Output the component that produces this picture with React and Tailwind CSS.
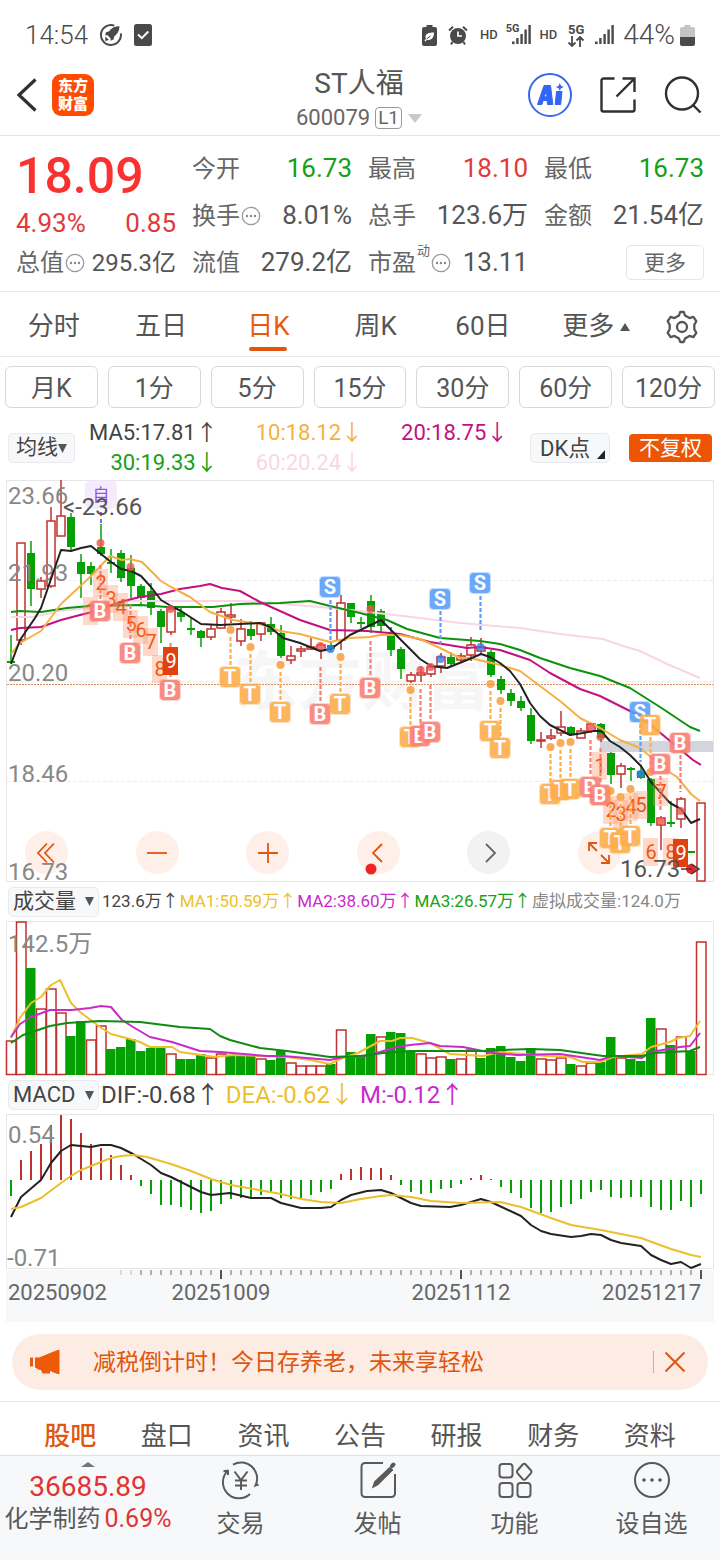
import React from "react";

const RED = "#c0302c";
const GREEN = "#04a004";

/* [color, bodyTop, bodyBottom, high, low], one entry per trading day */
const candles = [
  ["g", 661, 663, 635, 663], ["r", 543, 640, 543, 645], ["g", 553, 589, 541, 606], ["r", 581, 589, 577, 598],
  ["r", 521, 586, 507, 588], ["r", 516, 536, 480, 536], ["g", 517, 547, 513, 550], ["g", 562, 574, 554, 598],
  ["g", 566, 574, 562, 585], ["g", 547, 554, 524, 556], ["g", 562, 564, 549, 573], ["g", 553, 578, 550, 582],
  ["g", 568, 586, 555, 598], ["g", 586, 598, 584, 604], ["g", 591, 608, 583, 615], ["g", 611, 627, 609, 643],
  ["r", 609, 632, 606, 635], ["g", 612, 617, 608, 622], ["g", 628, 630, 618, 635], ["g", 631, 638, 630, 647],
  ["r", 629, 637, 625, 640], ["r", 612, 628, 608, 628], ["r", 615, 617, 603, 623], ["r", 629, 641, 619, 646],
  ["g", 629, 636, 621, 640], ["r", 623, 634, 623, 641], ["g", 624, 632, 617, 635], ["g", 633, 656, 625, 658],
  ["r", 656, 660, 646, 664], ["r", 649, 651, 646, 657], ["r", 647, 649, 638, 650], ["r", 645, 650, 643, 659],
  ["g", 645, 649, 642, 652], ["r", 603, 640, 595, 650], ["g", 603, 617, 603, 623], ["g", 622, 624, 617, 628],
  ["g", 601, 627, 595, 633], ["g", 611, 626, 609, 633], ["g", 635, 650, 627, 656], ["g", 649, 669, 647, 679],
  ["r", 675, 681, 672, 683], ["r", 673, 675, 666, 682], ["r", 667, 674, 664, 677], ["r", 657, 666, 653, 673],
  ["g", 657, 664, 652, 666], ["r", 656, 660, 653, 662], ["r", 645, 655, 637, 661], ["r", 647, 651, 638, 655],
  ["g", 652, 675, 650, 677], ["g", 679, 690, 676, 694], ["g", 693, 701, 689, 706], ["g", 701, 708, 696, 711],
  ["g", 715, 741, 708, 744], ["r", 740, 741, 732, 748], ["r", 736, 738, 729, 740], ["r", 727, 733, 711, 736],
  ["g", 727, 734, 726, 736], ["r", 731, 738, 728, 738], ["r", 724, 731, 723, 733], ["g", 724, 738, 723, 742],
  ["g", 753, 775, 752, 784], ["r", 766, 774, 763, 788], ["g", 768, 770, 767, 781], ["g", 771, 778, 765, 779],
  ["g", 779, 823, 778, 826], ["r", 818, 825, 816, 850], ["g", 822, 824, 801, 827], ["r", 799, 819, 797, 828],
  ["g", 851, 853, 851, 853], ["r", 803, 881, 803, 881],
];

const volume = [
  1040, 921, 968, 1008, 988, 1012, 1036, 1021, 1039, 1025, 1049, 1047, 1039, 1051, 1048, 1048, 1053, 1059, 1059, 1054,
  1057, 1053, 1056, 1056, 1056, 1058, 1060, 1051, 1062, 1065, 1065, 1065, 1064, 1029, 1052, 1055, 1034, 1036, 1032, 1033,
  1052, 1053, 1057, 1056, 1059, 1058, 1049, 1058, 1048, 1046, 1057, 1061, 1048, 1058, 1059, 1057, 1064, 1065, 1062, 1062,
  1037, 1057, 1059, 1061, 1018, 1028, 1045, 1036, 1051, 941,
];
/* Ten trading days per group */
const volumeColors = [
  "rrgrrrggrr", "ggggggrggg", "rrgggrggrr", "rrgrgggrgg", "grrrgrrggg", "gggrrrgrrg", "grgggrgrgr",
].join("");

const macd = [
  1196, 1160, 1151, 1144, 1125, 1115, 1119, 1133, 1144, 1148, 1155, 1165, 1175, 1186, 1194, 1205, 1205, 1207, 1210, 1213,
  1211, 1204, 1199, 1198, 1198, 1195, 1193, 1198, 1199, 1198, 1195, 1192, 1189, 1174, 1169, 1167, 1168, 1168, 1175, 1185,
  1192, 1194, 1193, 1189, 1188, 1184, 1178, 1175, 1179, 1187, 1193, 1198, 1208, 1213, 1212, 1207, 1204, 1199, 1192, 1190,
  1197, 1198, 1197, 1197, 1207, 1210, 1210, 1201, 1207, 1194,
];

const priceLines = [
  ["#f9d5e5", "11,617 33,617 60,611 100,607 133,601 167,601 240,601 260,602 320,607 360,611 420,618 460,623 520,628 560,634 603,639 620,645 640,651 667,664 700,678"],
  ["#0c930c", "11,612 20,611 41,612 67,608 90,606 140,605 167,607 213,607 240,604 280,603 310,601 330,606 360,613 387,620 407,629 440,638 480,641 500,644 520,650 540,658 570,668 600,676 630,688 660,707 690,727 700,731"],
  ["#c4117f", "11,630 20,628 41,627 61,620 80,615 100,610 120,602 140,597 161,594 180,589 200,586 210,584 222,588 240,591 260,602 280,611 300,620 330,630 367,631 400,634 430,642 467,648 480,647 500,650 530,660 550,673 580,689 600,696 640,716 693,760 701,765"],
  ["#f6b042", "11,654 20,643 41,631 61,604 90,577 110,556 122,560 130,559 142,562 161,581 171,587 190,597 210,612 233,620 260,624 280,631 300,634 330,642 350,638 370,637 380,635 400,635 420,639 440,648 460,658 470,658 500,665 520,671 540,686 560,701 580,718 600,728 620,740 640,748 651,757 663,768 677,777 691,794 700,801"],
  ["#222222", "11,664 20,640 35,618 41,608 61,550 71,551 81,548 91,546 101,554 111,562 121,569 131,571 141,576 151,587 161,600 171,606 181,611 201,624 220,625 240,624 260,623 270,627 283,638 300,643 320,651 331,649 350,635 381,620 400,639 420,659 431,666 447,668 467,660 481,654 490,657 500,663 510,671 520,684 530,703 540,716 550,725 570,735 583,733 593,731 601,731 610,741 620,747 630,755 641,766 651,782 670,803 681,809 691,823 700,819"],
];

const volumeLines = [
  ["#ecbf2c", "11,1038 20,1018 31,1003 41,997 51,985 60,980 71,1003 80,1012 100,1027 111,1034 130,1039 140,1042 150,1047 172,1047 180,1052 215,1057 233,1055 287,1057 310,1060 330,1064 340,1059 358,1053 380,1041 392,1041 400,1038 412,1038 430,1043 450,1054 483,1056 500,1052 547,1056 570,1057 583,1062 600,1062 613,1057 642,1054 651,1047 670,1042 678,1038 690,1036 700,1021"],
  ["#c92bcb", "11,1037 20,1024 31,1017 50,1010 72,1010 90,1008 101,1006 111,1007 122,1020 133,1027 150,1037 172,1042 200,1051 220,1052 267,1056 283,1056 330,1060 343,1057 360,1057 380,1052 397,1047 410,1045 430,1043 440,1046 463,1047 493,1053 517,1055 560,1054 600,1060 613,1056 642,1058 651,1052 680,1047 690,1046 700,1033"],
  ["#108a10", "11,1043 23,1035 50,1026 67,1023 100,1021 140,1022 180,1027 210,1029 220,1036 230,1040 260,1048 287,1051 330,1057 360,1056 383,1053 410,1051 483,1051 500,1050 530,1049 560,1050 603,1056 642,1056 653,1053 690,1051 700,1047"],
];

const macdLines = [
  ["#222222", "11,1217 21,1197 41,1180 51,1163 61,1151 71,1145 91,1147 101,1145 111,1145 121,1148 133,1154 151,1165 161,1173 171,1177 201,1192 211,1195 230,1193 251,1198 271,1198 281,1203 301,1208 321,1208 331,1207 341,1200 351,1195 367,1191 381,1190 391,1193 411,1203 421,1206 450,1207 461,1205 481,1199 491,1202 521,1216 531,1225 541,1231 551,1234 571,1237 581,1236 591,1234 601,1235 611,1240 621,1243 641,1246 651,1255 661,1260 671,1264 681,1262 691,1268 701,1264"],
  ["#ecbf2c", "11,1209 21,1207 41,1198 61,1183 71,1176 81,1170 111,1158 121,1156 133,1155 147,1157 171,1164 191,1171 211,1179 231,1185 281,1194 301,1199 321,1202 341,1203 361,1199 381,1196 391,1195 411,1197 431,1201 461,1203 500,1202 521,1207 551,1218 571,1225 601,1230 641,1238 671,1249 691,1255 701,1257"],
];

/* [letter, x, boxY, dotY, dashStart, dashEnd] */
const marks = [
  ["B", 100, 611, 543, 565, 600], ["B", 130, 653, 567, 605, 641], ["B", 170, 690, 609, 643, 678],
  ["T", 230, 677, 630, 637, 666], ["T", 250, 694, 647, 654, 683], ["T", 280, 712, 665, 672, 701],
  ["B", 320, 714, 646, 667, 702], ["S", 330, 587, 649, 600, 640], ["T", 340, 704, 657, 664, 693],
  ["B", 370, 688, 609, 641, 677], ["T", 410, 737, 690, 697, 726], ["B", 420, 736, 670, 689, 724],
  ["B", 430, 732, 667, 685, 721], ["S", 440, 599, 659, 611, 644], ["S", 480, 583, 647, 596, 630],
  ["T", 490, 731, 684, 691, 720], ["T", 500, 748, 701, 708, 737], ["T", 550, 794, 747, 754, 783],
  ["T", 560, 790, 743, 750, 779], ["T", 570, 789, 742, 749, 778], ["B", 590, 787, 727, 740, 775],
  ["B", 600, 795, 737, 748, 784], ["T", 610, 838, 791, 798, 827], ["T", 620, 843, 797, 804, 832],
  ["T", 630, 836, 789, 796, 825], ["S", 640, 712, 774, 724, 762], ["T", 650, 725, 772, 737, 766],
  ["B", 660, 764, 821, 776, 812], ["B", 680, 743, 811, 755, 792],
];
const markColors = { B: ["#f97f72", "#ef5350"], T: ["#fdae4b", "#f7962a"], S: ["#5b9ff8", "#2f80ed"] };

const turns = [
  ["1", 91, 611], ["2", 101, 583], ["3", 111, 599], ["4", 121, 607], ["5", 131, 624], ["6", 141, 630], ["7", 151, 642], ["8", 160, 669],
  ["1", 600, 766], ["2", 611, 810], ["3", 621, 814], ["4", 631, 807], ["5", 641, 805], ["6", 651, 852], ["7", 661, 792], ["8", 671, 852],
];

const xAt = (i) => 11 + 10 * i;

function Lines({ data, width = 2 }) {
  return data.map(([color, points]) => (
    <polyline key={color} points={points} fill="none" stroke={color} strokeWidth={width} strokeLinejoin="round" />
  ));
}

function Label({ x, y, children, anchor = "start", fill = "#888888", size = 24 }) {
  return (
    <text x={x} y={y} fontSize={size} fill={fill} textAnchor={anchor}>{children}</text>
  );
}

function PriceChart() {
  return (
    <svg viewBox="0 480 720 402" className="pointer-events-none relative z-10 block w-full overflow-visible" role="img" aria-label="日K线图">
      <rect x="6.5" y="480.5" width="707" height="401" fill="none" stroke="#e6e6e6" />
      {[580.5, 681.5, 781.5].map((y) => (
        <line key={y} x1="7" x2="713" y1={y} y2={y} stroke="#ededed" strokeDasharray="4 2" />
      ))}
      <text x="234" y="704" fontSize="64" fontWeight="700" fill="#f6f6f6">东方财富</text>
      <rect x="600" y="741" width="113" height="11" fill="#d2d6dc" />
      <line x1="7" x2="713" y1="684.5" y2="684.5" stroke="#d98a5c" strokeDasharray="2 1" />
      {candles.map(([c, top, bottom, high, low], i) => {
        const x = xAt(i);
        return c === "g" ? (
          <g key={i}>
            <line x1={x} x2={x} y1={high} y2={low} stroke={GREEN} strokeWidth="1.5" />
            <rect x={x - 4} y={top} width="8" height={bottom - top} fill={GREEN} />
          </g>
        ) : (
          <g key={i} stroke={RED} strokeWidth="1.5">
            <line x1={x} x2={x} y1={high} y2={top} />
            <line x1={x} x2={x} y1={bottom} y2={low} />
            <rect x={x - 4} y={top} width="8" height={bottom - top} fill="#ffffff" />
          </g>
        );
      })}
      <Label x="8" y="504">23.66</Label>
      <Label x="8" y="581">21.93</Label>
      <Label x="8" y="681">20.20</Label>
      <Label x="8" y="782">18.46</Label>
      <Label x="8" y="880">16.73</Label>
      <Lines data={priceLines} />
      {turns.map(([n, x, y]) => (
        <g key={`${n}-${x}`}>
          <rect x={x - 8} y={y - 14} width="15" height="28" fill="#ff9068" fillOpacity="0.35" />
          <text x={x} y={y + 7} fontSize="20" textAnchor="middle" fill="#f0560f">{n}</text>
        </g>
      ))}
      {marks.map(([letter, x, y, dot, from, to]) => {
        const [box, accent] = markColors[letter];
        return (
          <g key={`${letter}-${x}`}>
            <line x1={x + 0.5} x2={x + 0.5} y1={from} y2={to} stroke={box} strokeWidth="2.2" strokeDasharray="4 2" />
            <circle cx={x + 0.5} cy={dot} r="4" fill={accent} fillOpacity="0.8" />
            <rect x={x - 11} y={y - 11} width="22" height="22" rx="4" fill={box} fillOpacity="0.35" />
            <rect x={x - 10} y={y - 10} width="20" height="20" rx="4" fill={box} fillOpacity="0.85" />
            <text x={x} y={y + 7} fontSize="20" fontWeight="700" textAnchor="middle" fill="#ffffff">{letter}</text>
          </g>
        );
      })}
      {[[171, 661], [681, 853]].map(([x, y]) => (
        <g key={x}>
          <rect x={x - 8} y={y - 14} width="15" height="28" fill="#e2410f" />
          <text x={x} y={y + 7} fontSize="20" textAnchor="middle" fill="#ffffff">9</text>
        </g>
      ))}
      <rect x="85" y="480" width="32" height="29" rx="6" fill="#efe3fb" fillOpacity="0.7" />
      <line x1="101" x2="101" y1="512" y2="524" stroke="#a259e8" strokeWidth="2" strokeDasharray="4 3" />
      <text x="101" y="501" fontSize="17" textAnchor="middle" fill="#9b51e0">自</text>
      <Label x="63" y="515" fill="#555555">&lt;-23.66</Label>
      <circle cx="691" cy="869" r="5" fill="#e02828" />
      <circle cx="371" cy="869" r="5.5" fill="#f02323" />
      <Label x="620" y="877" fill="#555555">16.73</Label>
      <path d="M681 869h11M691 864l8 5-8 5" fill="none" stroke="#5a3535" strokeWidth="1.5" />
      <line x1="687" x2="694" y1="852.5" y2="852.5" stroke={GREEN} />
    </svg>
  );
}

function VolumeChart() {
  return (
    <svg viewBox="0 921 720 155" className="block w-full" role="img" aria-label="成交量图">
      <rect x="6.5" y="921.5" width="707" height="153" fill="none" stroke="#e6e6e6" />
      {volume.map((y, i) =>
        volumeColors[i] === "g" ? (
          <rect key={i} x={xAt(i) - 5} y={y} width="9.5" height={1075 - y} fill={GREEN} />
        ) : (
          <rect key={i} x={xAt(i) - 4.5} y={y + 1} width="9.5" height={1073.5 - y} fill="#ffffff" stroke={RED} strokeWidth="1.5" />
        )
      )}
      <Label x="8" y="952">142.5万</Label>
      <Lines data={volumeLines} />
    </svg>
  );
}

function MacdChart() {
  return (
    <svg viewBox="0 1114 720 208" className="block w-full" role="img" aria-label="MACD图">
      <rect x="6" y="1270" width="708" height="52" fill="#f7f8fa" />
      <rect x="6.5" y="1114.5" width="707" height="154" fill="none" stroke="#e6e6e6" />
      {macd.map((y, i) => (
        <line key={i} x1={xAt(i)} x2={xAt(i)} y1="1180" y2={y} stroke={y < 1180 ? RED : GREEN} strokeWidth="2" />
      ))}
      <Label x="8" y="1143">0.54</Label>
      <Label x="7" y="1266">-0.71</Label>
      <Lines data={macdLines} />
      {macd.map((_, i) => {
        if (i < 11) return null;
        const major = i === 21 || i === 45 || i === 69;
        return (
          <line key={i} x1={xAt(i)} x2={xAt(i)} y1="1270" y2={major ? 1279 : 1275} stroke={major ? "#555555" : "#999999"} strokeWidth={major ? 2 : 1.5} strokeOpacity={i < 13 ? 0.4 : 1} />
        );
      })}
      <Label x="8" y="1300" size={22} fill="#666666">20250902</Label>
      <Label x="221" y="1300" size={22} fill="#666666" anchor="middle">20251009</Label>
      <Label x="461" y="1300" size={22} fill="#666666" anchor="middle">20251112</Label>
      <Label x="701" y="1300" size={22} fill="#666666" anchor="end">20251217</Label>
    </svg>
  );
}

function InfoDot() {
  return (
    <svg width="20" height="20" viewBox="0 0 20 20" className="shrink-0" aria-hidden="true">
      <circle cx="10" cy="10" r="8.7" fill="none" stroke="#999999" strokeWidth="1.3" />
      <circle cx="6" cy="10" r="1.2" fill="#888888" />
      <circle cx="10" cy="10" r="1.2" fill="#888888" />
      <circle cx="14" cy="10" r="1.2" fill="#888888" />
    </svg>
  );
}

function Signal({ className }) {
  return (
    <svg width="20" height="20" viewBox="0 0 20 20" className={className} aria-hidden="true" fill="#4a4a4a">
      <rect x="0" y="16.5" width="2.6" height="2.6" />
      <rect x="4.2" y="13" width="2.4" height="6" />
      <rect x="8.4" y="9" width="2.4" height="10" />
      <rect x="12.4" y="4.5" width="2.4" height="14.5" />
      <rect x="16.4" y="0" width="2.4" height="19" />
    </svg>
  );
}

function StatusBar() {
  return (
    <div className="flex h-14 items-center justify-between pt-[14px] pr-[25px] pl-[25px] text-[26px] text-[#4a4a4a]">
      <div className="flex items-center">
        <span className="font-light">14:54</span>
        <svg width="24" height="24" viewBox="0 0 24 24" className="ml-[11px]" aria-hidden="true">
          <path d="M14 2.2A10 10 0 1 0 21.5 9" fill="none" stroke="#4a4a4a" strokeWidth="2" transform="rotate(8 12 12)" />
          <path d="M20.5 3.2c-5.500 0-8.500 2.300-10.300 5L7 9.200l-.800 3 2.400.100 2.900 2.900.200 2.600 2.800-1.200.900-3.300c2.800-2.200 4.800-5 5.100-10.100z" fill="#4a4a4a" />
          <path d="M6.500 13.500l3.500 3.500-4 1z" fill="#4a4a4a" />
        </svg>
        <svg width="18" height="22" viewBox="0 0 18 22" className="ml-[11px]" aria-hidden="true">
          <rect width="18" height="22" rx="2.500" fill="#4a4a4a" />
          <path d="M4 10.500l3.800 3.700L14.300 7.500" fill="none" stroke="#ffffff" strokeWidth="2" />
        </svg>
      </div>
      <div className="flex items-center">
        <svg width="15" height="21" viewBox="0 0 15 21" aria-hidden="true">
          <path d="M4.500 0h6v2H13a2 2 0 0 1 2 2v15a2 2 0 0 1-2 2H2a2 2 0 0 1-2-2V4a2 2 0 0 1 2-2h2.500z" fill="#4a4a4a" />
          <path d="M12 7.500C7 7.500 3.500 8.500 3.500 12l.300 1.800L2.500 16l1 .500 1.200-1.500c4.500.500 7.300-2 7.300-7.500z" fill="#ffffff" />
          <path d="M4.500 14l4-3" stroke="#4a4a4a" strokeWidth="1" />
        </svg>
        <svg width="20" height="21" viewBox="0 0 20 21" className="ml-[11px]" aria-hidden="true">
          <circle cx="10" cy="11" r="8" fill="#4a4a4a" />
          <path d="M10 6.500V11h4" fill="none" stroke="#ffffff" strokeWidth="1.700" />
          <path d="M1 5.500L5 1.800M19 5.500L15 1.800M4.500 17L3 19.500M15.500 17l1.500 2.500" stroke="#4a4a4a" strokeWidth="2" />
        </svg>
        <span className="ml-3 text-[13px] font-medium">HD</span>
        <span className="ml-2 -mt-3 text-[11px] font-bold">5G</span>
        <Signal className="-ml-2" />
        <span className="ml-2 text-[13px] font-medium">HD</span>
        <span className="ml-[10px] flex flex-col items-center">
          <span className="text-[13px] leading-3 font-bold">5G</span>
          <svg width="18" height="11" viewBox="0 0 18 11" aria-hidden="true">
            <path d="M5 0v10M1.500 6.500L5 10l3.500-3.500M13 11V1M9.500 4.500L13 1l3.500 3.500" fill="none" stroke="#4a4a4a" strokeWidth="1.800" />
          </svg>
        </span>
        <Signal className="ml-[10px]" />
        <span className="ml-2 text-[28px] font-light">44%</span>
        <svg width="15" height="21" viewBox="0 0 15 21" className="ml-[5px]" aria-hidden="true">
          <path d="M4.500 0h6v2H13a2 2 0 0 1 2 2v8H0V4a2 2 0 0 1 2-2h2.500z" fill="#c4c4c4" />
          <path d="M0 12h15v7a2 2 0 0 1-2 2H2a2 2 0 0 1-2-2z" fill="#4a4a4a" />
        </svg>
      </div>
    </div>
  );
}

function Header() {
  return (
    <header className="grid h-20 grid-cols-[1fr_auto_1fr] items-center border-b border-[#e4e4e4] pr-[18px] pb-[6px] pl-4">
      <div className="flex items-center gap-[14px]">
        <button type="button" aria-label="返回">
          <svg width="22" height="36" viewBox="0 0 22 36" aria-hidden="true">
            <path d="M19.500 2.500L3 18l16.500 15.500" fill="none" stroke="#303030" strokeWidth="3.200" />
          </svg>
        </button>
        <a href="#home" className="flex size-[42px] flex-col items-center justify-center rounded-[9px] bg-[#ff4a00] text-[15px] leading-[18px] font-black text-white">
          <span>东方</span>
          <span>财富</span>
        </a>
      </div>
      <div className="flex flex-col items-center pt-[10px] text-[#555555]">
        <h1 className="text-[28px] leading-9">ST人福</h1>
        <button type="button" className="flex items-center text-[22px] leading-8 text-[#666666]">
          600079
          <span className="ml-[5px] rounded-[4px] border border-[#999999] px-[2px] text-[19px] leading-[20px]">L1</span>
          <svg width="14" height="9" viewBox="0 0 14 9" className="ml-[6px]" aria-hidden="true">
            <path d="M0 0h14L7 9z" fill="#c8c8c8" />
          </svg>
        </button>
      </div>
      <div className="flex items-center justify-end gap-[28px]">
        <button type="button" aria-label="Ai">
          <svg width="44" height="44" viewBox="0 0 44 44" aria-hidden="true">
            <circle cx="22" cy="22" r="21" fill="none" stroke="#3b66ee" strokeWidth="2" />
            <path d="M9.500 31.500L16 12.500h6.500l2.300 19H19.500l-.300-4h-4l-1.300 4zM16.200 23.700h2.600l-.400-5.500z" fill="#3366f5" stroke="#3366f5" strokeLinejoin="round" fillRule="evenodd" />
            <path d="M28.500 18.500h5.500L32.700 31.500h-5.500z" fill="#3366f5" stroke="#3366f5" strokeLinejoin="round" />
            <path d="M31.800 10l1.200 2.800 2.800 1.200-2.800 1.200-1.200 2.800-1.200-2.800-2.800-1.200 2.800-1.200z" fill="#3366f5" />
          </svg>
        </button>
        <button type="button" aria-label="分享">
          <svg width="36" height="36" viewBox="0 0 36 36" fill="none" stroke="#303030" strokeWidth="2.400" aria-hidden="true">
            <path d="M14.500 1.500H3.500a2 2 0 0 0-2 2v29a2 2 0 0 0 2 2h29a2 2 0 0 0 2-2V22.500M22.500 1.500h12V15M34 2L16.500 19.500" />
          </svg>
        </button>
        <button type="button" aria-label="搜索">
          <svg width="38" height="38" viewBox="0 0 38 38" fill="none" stroke="#303030" strokeWidth="2.400" aria-hidden="true">
            <circle cx="18" cy="17.500" r="16" />
            <path d="M28.500 28.500l8 8" />
          </svg>
        </button>
      </div>
    </header>
  );
}

function Pair({ label, value, color = "text-[#555555]", info, note, size = "text-[26px]" }) {
  return (
    <div className="flex items-center justify-between">
      <span className="flex items-center gap-[1px] text-2xl">
        {label}
        {note && <span className="mb-6 text-[13px] leading-none">{note}</span>}
        {info && <InfoDot />}
      </span>
      <span className={`${size} ${color}`}>{value}</span>
    </div>
  );
}

function Quote() {
  return (
    <section className="grid grid-cols-4 grid-rows-[47px_47px_47px] gap-x-4 border-b border-[#e8e8e8] px-4 pt-[9px] pb-[5px] whitespace-nowrap text-[#666666]">
      <div className="row-span-2 text-[#e03a3a]">
        <div className="text-[50px] leading-[62px] font-medium text-[#fa3131]">18.09</div>
        <div className="flex justify-between text-[26px] leading-8"><span>4.93%</span><span>0.85</span></div>
      </div>
      <Pair label="今开" value="16.73" color="text-[#16a016]" />
      <Pair label="最高" value="18.10" color="text-[#e03a3a]" />
      <Pair label="最低" value="16.73" color="text-[#16a016]" />
      <Pair label="换手" value="8.01%" info />
      <Pair label="总手" value="123.6万" />
      <Pair label="金额" value="21.54亿" />
      <Pair label="总值" value="295.3亿" info size="text-2xl" />
      <Pair label="流值" value="279.2亿" />
      <Pair label="市盈" note="动" value="13.11" info />
      <div className="flex items-center justify-end">
        <button type="button" className="h-[35px] w-[78px] rounded-[5px] border border-[#e6e6e6] text-[21px] leading-7">更多</button>
      </div>
    </section>
  );
}

function PeriodTabs() {
  return (
    <nav className="flex h-[65px] items-center border-b border-[#e8e8e8] pt-[5px] text-[26px] text-[#555555]">
      {["分时", "五日", "日K", "周K", "60日"].map((t) =>
        t === "日K" ? (
          <button key={t} type="button" aria-current="true" className="relative flex-1 text-[#e55b12]">
            {t}
            <span className="absolute -bottom-[5px] left-1/2 h-1 w-[38px] -translate-x-1/2 rounded-full bg-[#e0560f]" />
          </button>
        ) : (
          <button key={t} type="button" className="flex-1">{t}</button>
        )
      )}
      <button type="button" className="flex flex-1 items-center justify-center">
        <span className="flex items-center gap-[6px] pl-3">
          更多
          <svg width="10" height="8" viewBox="0 0 10 8" aria-hidden="true"><path d="M5 0l5 8H0z" fill="#555555" /></svg>
        </span>
      </button>
      <button type="button" aria-label="设置" className="flex w-[76px] shrink-0 justify-center">
        <svg width="34" height="34" viewBox="0 0 34 34" fill="none" stroke="#555555" strokeWidth="2.300" strokeLinejoin="round" aria-hidden="true">
          <path d="M14 5.500L15.200 2h3.600L20 5.500l4.500 2.600 3.900-1.200 2.900 4.300-2 3.600v4.400l2 3.600-2.900 4.300-3.900-1.200-4.500 2.600-1.200 3.500h-3.600L14 28.500l-4.500-2.600-3.900 1.200-2.900-4.300 2-3.600v-4.400l-2-3.600 2.900-4.300 3.900 1.200z" />
          <circle cx="17" cy="17" r="5" />
        </svg>
      </button>
    </nav>
  );
}

function Caret() {
  return <svg width="9" height="9" viewBox="0 0 9 9" aria-hidden="true"><path d="M0 0h9L4.500 9z" fill="#555555" /></svg>;
}

const chip = "flex h-[30px] items-center rounded-[5px] border border-[#e8eaee] bg-[#f7f8fa] text-[#444444]";

function MaRow() {
  return (
    <div className="flex h-[72px] items-center px-2 pt-2 text-[22px] whitespace-nowrap">
      <button type="button" className={`${chip} w-[67px] justify-center text-[21px]`}>均线<Caret /></button>
      <div className="ml-[14px] grid grid-cols-[auto_auto_auto] gap-x-[38px] leading-[30px]">
        <span className="text-right text-[#444444]">MA5:17.81↑</span>
        <span className="text-[#f6b042]">10:18.12↓</span>
        <span className="text-[#c4117f]">20:18.75↓</span>
        <span className="text-right text-[#16a016]">30:19.33↓</span>
        <span className="text-[#fad7e6]">60:20.24↓</span>
      </div>
      <div className="ml-auto flex gap-[19px]">
        <button type="button" className={`${chip} relative w-20 pl-[9px]`}>
          DK点
          <svg width="8" height="9" viewBox="0 0 8 9" className="absolute right-1 bottom-[3px]" aria-hidden="true"><path d="M8 0v9H0z" fill="#222222" /></svg>
        </button>
        <button type="button" className="h-[28px] w-[83px] self-center rounded-[4px] bg-[#ed5505] text-[21px] leading-7 text-white">不复权</button>
      </div>
    </div>
  );
}

function ChartControls() {
  const circle = "flex size-[43px] items-center justify-center rounded-full bg-[#fef0e8]";
  const stroke = { width: 24, height: 24, viewBox: "0 0 24 24", fill: "none", stroke: "#e0560f", strokeWidth: 1.8, "aria-hidden": true };
  return (
    <div className="absolute right-[99px] bottom-2 left-[25px] flex justify-between">
      <button type="button" aria-label="最左" className={circle}><svg {...stroke}><path d="M12 2.500L3 12l9 9.500M19 2.500L10 12l9 9.500" /></svg></button>
      <button type="button" aria-label="缩小" className={circle}><svg {...stroke}><path d="M2 12h20" /></svg></button>
      <button type="button" aria-label="放大" className={circle}><svg {...stroke}><path d="M2 12h20M12 2v20" /></svg></button>
      <button type="button" aria-label="左移" className={circle}><svg {...stroke}><path d="M16 3l-9 9 9 9" /></svg></button>
      <button type="button" aria-label="右移" className="flex size-[43px] items-center justify-center rounded-full bg-[#f2f2f2]"><svg {...stroke} stroke="#666666"><path d="M9 3l9 9-9 9" /></svg></button>
      <button type="button" aria-label="全屏" className={circle}><svg {...stroke}><path d="M2 10V2h8M2 2l8 8M22 14v8h-8M22 22l-8-8" /></svg></button>
    </div>
  );
}

function Banner() {
  return (
    <div className="mx-3 mt-3 mb-[11px] flex h-14 items-center rounded-full bg-[#fcece3] pr-[22px] pl-[18px] text-[#e0560f]">
      <svg width="32" height="26" viewBox="0 0 32 26" className="shrink-0" aria-hidden="true">
        <path d="M0 8.500h3v9H0zM5 8.500h4L27.500 1h2v24h-2L20 22v2.500h-7.500L11 21h-1.500L5 18.500z" fill="#ef5a08" />
      </svg>
      <a href="#pension" className="ml-[31px] pt-[2px] text-[23px] whitespace-nowrap">减税倒计时！今日存养老，未来享轻松</a>
      <button type="button" aria-label="关闭" className="ml-auto border-l border-[#e9a27e] pl-[10px]">
        <svg width="22" height="22" viewBox="0 0 22 22" aria-hidden="true"><path d="M1.500 1.500l19 19M20.500 1.500l-19 19" stroke="#e0560f" strokeWidth="2" /></svg>
      </button>
    </div>
  );
}

const navIcons = {
  交易: (
    <>
      <path d="M12 4.700A16 16 0 0 1 34.500 25.500l3-1M7 10.500A16 16 0 0 0 29 34M7 10.500l-4.500.800M7 10v5" />
      <path d="M13.500 11.500l6.500 8.500 6.500-8.500M20 20v10M14 20.500h12M14 25.500h12" />
    </>
  ),
  发帖: (
    <>
      <path d="M25 3H7a3.500 3.500 0 0 0-3.500 3.500v27A3.500 3.500 0 0 0 7 37h26.500a3.500 3.500 0 0 0 3.500-3.500V14" />
      <path d="M15.500 26.500l1.500-4.500L32 8l2 2-14.500 14.500z" fill="#5a5a5a" />
      <path d="M34 6l1.500-1.500" strokeWidth="4" strokeLinecap="round" />
    </>
  ),
  功能: (
    <>
      <rect x="4.500" y="4" width="13" height="13.500" rx="3" />
      <rect x="4.500" y="23" width="13" height="14" rx="3" />
      <rect x="22.500" y="23" width="13" height="14" rx="3" />
      <path d="M27.700 4.500a2 2 0 0 1 3 0l5.300 6a2 2 0 0 1 0 2.600l-5.300 6a2 2 0 0 1-3 0l-5.300-6a2 2 0 0 1 0-2.600z" />
    </>
  ),
  设自选: (
    <>
      <circle cx="20" cy="20" r="17" />
      <path d="M12 20h.100M20 20h.100M28 20h.100" strokeWidth="3.600" strokeLinecap="round" />
    </>
  ),
};

function BottomBar() {
  return (
    <footer className="flex h-[105px] border-t border-[#dfe1e4] bg-[#f7f8fa] text-2xl text-[#5a5a5a]">
      <button type="button" className="flex w-[172px] shrink-0 flex-col items-center pt-[6px] pl-1 whitespace-nowrap">
        <svg width="14" height="5" viewBox="0 0 14 5" aria-hidden="true"><path d="M7 0l7 5H0z" fill="#777777" /></svg>
        <span className="mt-[2px] text-[28px] leading-9 text-[#e03434]">36685.89</span>
        <span className="flex items-center gap-1 leading-7">化学制药<span className="text-[25px] text-[#e03434]">0.69%</span></span>
      </button>
      {Object.entries(navIcons).map(([label, icon]) => (
        <button key={label} type="button" className="flex flex-1 flex-col items-center pt-1">
          <svg width="40" height="40" viewBox="0 0 40 40" fill="none" stroke="#5a5a5a" strokeWidth="2" aria-hidden="true">{icon}</svg>
          <span className="mt-[6px] leading-9">{label}</span>
        </button>
      ))}
    </footer>
  );
}

export default function App() {
  return (
    <main className="w-full bg-white font-['Roboto','Noto_Sans_CJK_SC',sans-serif]">
      <StatusBar />
      <Header />
      <Quote />
      <PeriodTabs />
      <div className="flex gap-[10px] px-[5px] pt-[9px] text-[25px] text-[#555555]">
        {["月K", "1分", "5分", "15分", "30分", "60分", "120分"].map((p) => (
          <button key={p} type="button" className="h-[42px] flex-1 rounded-[6px] border border-[#d8d8d8] pt-1 leading-9 whitespace-nowrap">{p}</button>
        ))}
      </div>
      <MaRow />
      <div className="relative">
        <ChartControls />
        <PriceChart />
      </div>
      <div className="flex h-[39px] items-center gap-[1px] pl-2 text-[17px] whitespace-nowrap">
        <button type="button" className={`${chip} mr-[2px] w-[91px] shrink-0 justify-between px-1 text-[21px]`}>成交量<Caret /></button>
        <span className="text-[#444444]">123.6万↑</span>
        <span className="text-[#ecbf2c]">MA1:50.59万↑</span>
        <span className="text-[#c92bcb]">MA2:38.60万↑</span>
        <span className="text-[#16a016]">MA3:26.57万↑</span>
        <span className="text-[#888888]">虚拟成交量:124.0万</span>
      </div>
      <VolumeChart />
      <div className="flex h-[38px] items-center gap-[6px] pl-2 text-2xl whitespace-nowrap">
        <button type="button" className={`${chip} -mr-1 w-[91px] shrink-0 justify-between px-1 text-[22px]`}>MACD<Caret /></button>
        <span className="text-[#444444]">DIF:-0.68↑</span>
        <span className="text-[#ecbf2c]">DEA:-0.62↓</span>
        <span className="text-[#c92bcb]">M:-0.12↑</span>
      </div>
      <MacdChart />
      <Banner />
      <nav className="flex h-[54px] border-t border-[#e8e8e8] px-[22px] pt-[15px] text-[26px] leading-[38px] text-[#555555]">
        {["股吧", "盘口", "资讯", "公告", "研报", "财务", "资料"].map((t) => (
          <a key={t} href={`#${t}`} className={t === "股吧" ? "flex-1 text-center font-medium text-[#e0560f]" : "flex-1 text-center"}>{t}</a>
        ))}
      </nav>
      <BottomBar />
    </main>
  );
}
